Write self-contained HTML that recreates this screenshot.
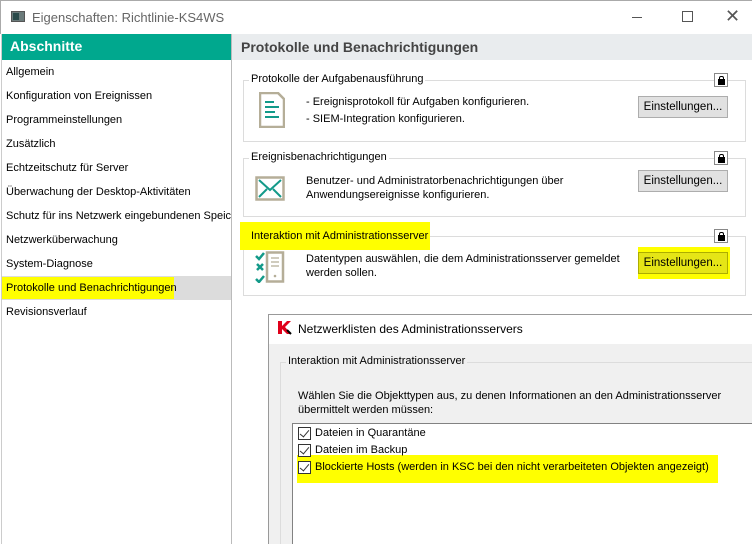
<!DOCTYPE html>
<html><head><meta charset="utf-8"><style>
*{margin:0;padding:0;box-sizing:border-box}
body{width:752px;height:544px;overflow:hidden;background:#fff;font-family:"Liberation Sans",sans-serif;font-size:11px;color:#000;position:relative}
.a{position:absolute}
.item{position:absolute;left:6px;font-size:11px}
.grp{position:absolute;left:243px;width:503px;border:1px solid #dcdcdc}
.gt{position:absolute;background:#fff;padding:0 2px;font-size:11px}
.btn{position:absolute;left:638px;width:90px;height:22px;background:#e1e1e1;border:1px solid #adadad;font-size:11.5px;text-align:center;line-height:20px}
.lock{position:absolute;left:714px;width:14px;height:14px;border:1px solid #888;background:#fff}
.lock:after{content:"";position:absolute;left:3px;top:5px;width:7px;height:6px;background:#000}
.lock:before{content:"";position:absolute;left:4px;top:2px;width:3px;height:4px;border:1px solid #000;border-bottom:none;border-radius:2px 2px 0 0}
.hl{position:absolute;background:#ffff00}
.cb{position:absolute;left:298px;width:13px;height:13px;border:1px solid #333;background:#fff}
.cb:after{content:"";position:absolute;left:3px;top:0px;width:4px;height:8px;border:solid #333;border-width:0 1.5px 1.5px 0;transform:rotate(40deg)}
.t{font-size:11px}
</style></head><body>
<div class="a" style="left:0;top:0;width:752px;height:34px;border-top:1px solid #aaa;border-left:1px solid #aaa"></div>
<div class="a" style="left:11px;top:11px;width:14px;height:11px;background:#6b7b7b;border:1px solid #555"></div>
<div class="a" style="left:13px;top:13px;width:6px;height:7px;background:#2a4a4a"></div>
<div class="a" style="left:32px;top:10px;font-size:13px;color:#666">Eigenschaften: Richtlinie-KS4WS</div>
<div class="a" style="left:632px;top:17px;width:10px;height:1px;background:#555"></div>
<div class="a" style="left:682px;top:11px;width:11px;height:11px;border:1px solid #555"></div>
<div class="a" style="left:725px;top:6px;font-size:18px;color:#555">✕</div>
<div class="a" style="left:2px;top:34px;width:229px;height:26px;background:#00a88e;color:#fff;font-weight:bold;font-size:14px;padding:4px 0 0 8px">Abschnitte</div>
<div class="a" style="left:231px;top:34px;width:1px;height:510px;background:#bbb"></div>
<div class="a" style="left:1px;top:34px;width:1px;height:510px;background:#ccc"></div>
<div class="a" style="left:2px;top:276px;width:229px;height:24px;background:#dcdcdc"></div>
<div class="hl" style="left:2px;top:277px;width:172px;height:22px"></div>
<div class="item" style="top:66px">Allgemein</div>
<div class="item" style="top:90px">Konfiguration von Ereignissen</div>
<div class="item" style="top:114px">Programmeinstellungen</div>
<div class="item" style="top:138px">Zusätzlich</div>
<div class="item" style="top:162px">Echtzeitschutz für Server</div>
<div class="item" style="top:186px">Überwachung der Desktop-Aktivitäten</div>
<div class="item" style="top:210px;white-space:nowrap;width:225px;overflow:hidden">Schutz für ins Netzwerk eingebundenen Speich</div>
<div class="item" style="top:234px">Netzwerküberwachung</div>
<div class="item" style="top:258px">System-Diagnose</div>
<div class="item" style="top:282px">Protokolle und Benachrichtigungen</div>
<div class="item" style="top:306px">Revisionsverlauf</div>
<div class="a" style="left:232px;top:34px;width:520px;height:26px;background:#e9ecee;color:#444;font-weight:bold;font-size:14px;padding:5px 0 0 9px">Protokolle und Benachrichtigungen</div>
<div class="grp" style="top:80px;height:62px"></div>
<div class="gt" style="left:249px;top:73px">Protokolle der Aufgabenausführung</div>
<div class="lock" style="top:73px"></div>
<svg class="a" style="left:259px;top:92px" width="26" height="36"><path d="M1 1h18l6 6v28H1z" fill="#fff" stroke="#b5ae98" stroke-width="2.5"/><g stroke="#139a89" stroke-width="2"><path d="M6 10h9M6 15h14M6 20h10M6 25h14"/></g></svg>
<div class="a t" style="left:306px;top:96px">- Ereignisprotokoll für Aufgaben konfigurieren.</div>
<div class="a t" style="left:306px;top:113px">- SIEM-Integration konfigurieren.</div>
<div class="btn" style="top:96px">Einstellungen...</div>
<div class="grp" style="top:158px;height:59px"></div>
<div class="gt" style="left:249px;top:151px">Ereignisbenachrichtigungen</div>
<div class="lock" style="top:151px"></div>
<svg class="a" style="left:255px;top:176px" width="30" height="26"><rect x="1.5" y="1.5" width="27" height="22" fill="#fff" stroke="#b5ae98" stroke-width="2.5"/><path d="M4 4l11 10L26 4M4 21l8-8M26 21l-8-8" stroke="#139a89" stroke-width="2" fill="none"/></svg>
<div class="a t" style="left:306px;top:174px;line-height:14px">Benutzer- und Administratorbenachrichtigungen über<br>Anwendungsereignisse konfigurieren.</div>
<div class="btn" style="top:170px">Einstellungen...</div>
<div class="grp" style="top:236px;height:60px"></div>
<div class="hl" style="left:240px;top:222px;width:190px;height:28px"></div>
<div class="gt" style="left:249px;top:230px;background:transparent">Interaktion mit Administrationsserver</div>
<div class="lock" style="top:229px"></div>
<svg class="a" style="left:254px;top:251px" width="36" height="32"><path d="M2 5l3 3 5-6M2 28l3 3 5-6" stroke="#139a89" stroke-width="2.5" fill="none"/><path d="M3 13l6 6M9 13l-6 6" stroke="#139a89" stroke-width="2.5"/><rect x="13" y="1.5" width="16" height="29" fill="#fff" stroke="#b5ae98" stroke-width="2.5"/><path d="M17 7h8M17 11h8M17 15h8" stroke="#b5ae98" stroke-width="1.2"/><circle cx="21" cy="25" r="1.3" fill="#b5ae98"/></svg>
<div class="a t" style="left:306px;top:252px;line-height:14px">Datentypen auswählen, die dem Administrationsserver gemeldet<br>werden sollen.</div>
<div class="hl" style="left:638px;top:247px;width:92px;height:32px"></div>
<div class="btn" style="top:252px;background:#e5e516;border-color:#adad00">Einstellungen...</div>
<div class="a" style="left:268px;top:314px;width:484px;height:230px;border:1px solid #999;border-right:none;border-bottom:none;background:#f0f0f0"></div>
<div class="a" style="left:269px;top:315px;width:483px;height:29px;background:#fff"></div>
<svg class="a" style="left:278px;top:321px" width="14" height="14"><path d="M0 0h4v5l5-5h4l-6 6 6 7h-4l-5-5v5H0z" fill="#e0001a"/><path d="M9 9l4 4" stroke="#000" stroke-width="2"/></svg>
<div class="a" style="left:298px;top:322px;font-size:12px">Netzwerklisten des Administrationsservers</div>
<div class="a" style="left:280px;top:362px;width:472px;height:182px;border:1px solid #dcdcdc;border-right:none;border-bottom:none"></div>
<div class="a t" style="left:286px;top:355px;background:#f0f0f0;padding:0 2px">Interaktion mit Administrationsserver</div>
<div class="a t" style="left:298px;top:389px;line-height:14px">Wählen Sie die Objekttypen aus, zu denen Informationen an den Administrationsserver<br>übermittelt werden müssen:</div>
<div class="a" style="left:292px;top:423px;width:460px;height:121px;background:#fff;border:1px solid #828282;border-right:none;border-bottom:none"></div>
<div class="hl" style="left:297px;top:455px;width:421px;height:28px"></div>
<div class="cb" style="top:427px"></div>
<div class="a t" style="left:315px;top:427px">Dateien in Quarantäne</div>
<div class="cb" style="top:444px"></div>
<div class="a t" style="left:315px;top:444px">Dateien im Backup</div>
<div class="cb" style="top:461px"></div>
<div class="a t" style="left:315px;top:461px">Blockierte Hosts (werden in KSC bei den nicht verarbeiteten Objekten angezeigt)</div>
</body></html>
